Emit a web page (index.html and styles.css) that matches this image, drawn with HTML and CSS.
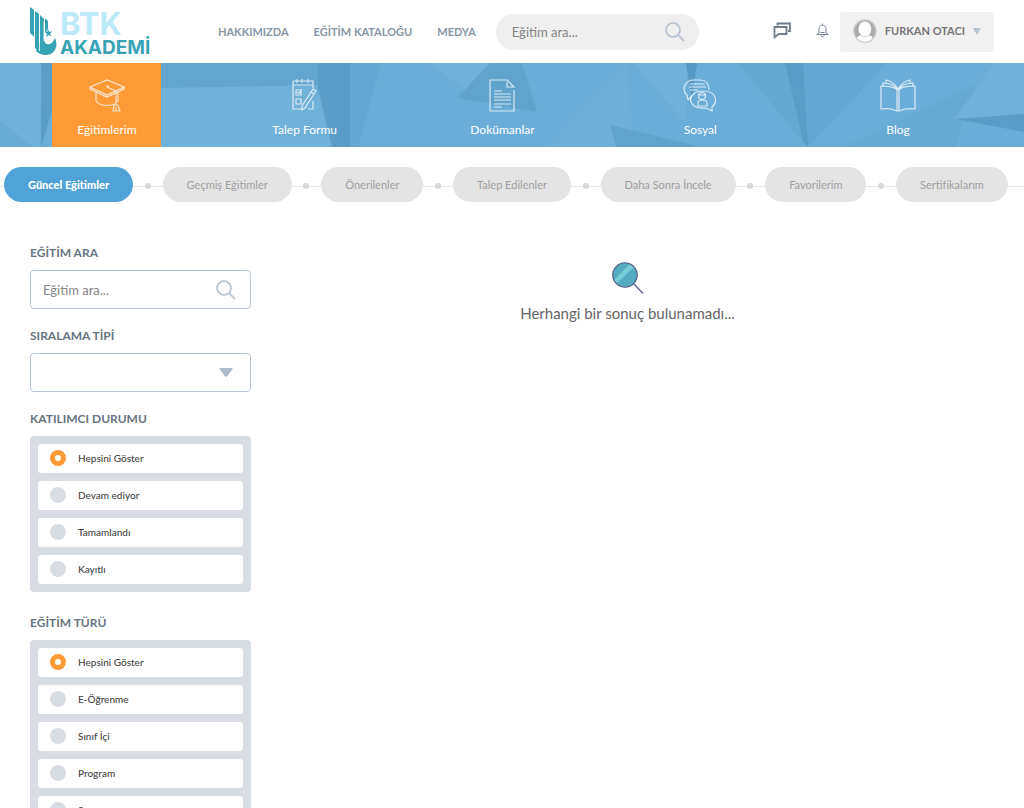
FILE: index.html
```html
<!DOCTYPE html>
<html lang="tr">
<head>
<meta charset="utf-8">
<meta name="viewport" content="width=device-width, initial-scale=1">
<title>BTK Akademi</title>
<link rel="stylesheet" href="styles.css">
</head>
<body>
<header class="header">
  <a class="logo" href="#">
    <svg class="logo-mark" width="27" height="50" viewBox="0 0 27 50" fill="#38a3b5">
      <path d="M0 0l4 3v27l-4-4zM5 4l4 3v38l-4-4V30zM10 8l4 4v35l-4-1zM15 11l3 3v8l-3 4z"/>
      <path d="M18 22l1.300 2.700 3-.2-2.200 2 1.400 3-2.800-1.500-2.500 1.900.7-3.100-2.400-2 3-.3z"/>
      <path d="M14 33c1 6 8 6 11-2 4 9-1 17-9 17-5 0-8-2-10-4l6-15z"/>
      <path d="M9.500 8v36M14 14v20" fill="none" stroke="#fff" stroke-width=".8"/>
    </svg>
    <span class="logo-text"><span class="logo-top">BTK</span><span class="logo-bottom">AKADEMİ</span></span>
  </a>
  <nav class="main-nav">
    <a href="#">HAKKIMIZDA</a>
    <a href="#">EĞİTİM KATALOĞU</a>
    <a href="#">MEDYA</a>
  </nav>
  <form class="top-search">
    <input type="text" placeholder="Eğitim ara..." aria-label="Eğitim ara">
    <button type="button" aria-label="Ara"><svg width="20" height="20" viewBox="0 0 20 20" fill="none" stroke="#b5c2d1" stroke-width="1.700"><circle cx="8" cy="8" r="7"/><path d="M13 13l6 6"/></svg></button>
  </form>
  <div class="user-area">
    <button class="icon-button" type="button" aria-label="Mesajlar">
      <svg width="18" height="17" viewBox="0 0 18 17" fill="none" stroke="#6f7d8d" stroke-width="1.800"><path d="M4.500 3.500V1.500H17v7.500h-2"/><path d="M1.500 5h12v7H6l-4.500 3.200z"/></svg>
    </button>
    <button class="icon-button" type="button" aria-label="Bildirimler">
      <svg width="13" height="15" viewBox="0 0 13 15" fill="none" stroke="#788797"><path d="M6.500.5v1.500M3 10V6c0-5 7-5 7 0v4l2.300 1.500H.7L3 10zM5 12c0 2.500 3 2.500 3 0M4.500 9.500h4"/></svg>
    </button>
    <button class="profile" type="button">
      <svg width="24" height="24" viewBox="0 0 24 24"><circle cx="12" cy="12" r="11" fill="#aaa" stroke="#c5c5c5" stroke-width="1.500"/><ellipse cx="12" cy="10" rx="6.500" ry="7.500" fill="#fff"/><path d="M4 19c2-3 4-2.500 5-2 2 1.500 4 1.500 6 0 1-.5 3-1 5 2-4 5-12 5-16 0z" fill="#fff"/></svg>
      <span>FURKAN OTACI</span>
      <svg width="8" height="6" viewBox="0 0 8 6"><path d="M0 0h8L4.500 6h-1z" fill="#b5c2d1"/></svg>
    </button>
  </div>
</header>

<nav class="banner">
  <svg class="banner-art" viewBox="0 0 1024 84" preserveAspectRatio="none" aria-hidden="true">
    <path d="M0 0h41l-1 84H0z" fill="#70b1da"/>
    <path d="M0 57l33 27H0z" fill="#68abd4"/>
    <path d="M41 0h12v44L41 84z" fill="#5a9dc8"/>
    <path d="M161 0h157v22l-157 3z" fill="#62a6d0"/>
    <path d="M161 25l155-2 16 61H161z" fill="#70b1da"/>
    <path d="M318 0h33v84h-19l-14-60z" fill="#5a9dc8"/>
    <path d="M350 0h31l-23 84h-8z" fill="#63a7d2"/>
    <path d="M430 0h65l-28 28z" fill="#70b1da"/>
    <path d="M490 0h32l15 49-80-14z" fill="#60a4ce"/>
    <path d="M550 84l76-84 7 84z" fill="#6dafd9"/>
    <path d="M610 62l92 22h-86z" fill="#60a4ce"/>
    <path d="M634 0h53l-2 60z" fill="#70b1da"/>
    <path d="M686 0h11l-5 38z" fill="#5699c4"/>
    <path d="M738 0h66l3 84z" fill="#65a9d3"/>
    <path d="M785 0h102l-79 84z" fill="#63a7d2"/>
    <path d="M785 0h18l5 84-5-6z" fill="#5a9dc8"/>
    <path d="M975 22L843 84h112z" fill="#66aad4"/>
    <path d="M994 0h30v51l-69 5z" fill="#70b1da"/>
    <path d="M955 56l69-5v18z" fill="#5a9dc8"/>
  </svg>
  <a class="tab tab-active" href="#">
    <svg width="36" height="34" viewBox="0 0 36 34"><path d="M1 9L18 2l17 7-17 8zM1 9v2l17 8 17-8V9M7 14v9c4 6 18 6 22 0v-9M18 9l9 4v14M17 8h3M25 27h4l2 6h-7zM27 29v4"/></svg>
    <span>Eğitimlerim</span>
  </a>
  <a class="tab" href="#">
    <svg width="36" height="34" viewBox="0 0 36 34"><path d="M6 3v28h10M6 3h20v7M26 23v8h-5M6 7h20M10 1v4M15 1v4M21 1v4M9 12h5v5H9zM9 21h5v5H9zM10 14l2 1 3-4M26 11l3 2-11 17-3 2v-4zM24 14l3 2"/></svg>
    <span>Talep Formu</span>
  </a>
  <a class="tab" href="#">
    <svg width="36" height="34" viewBox="0 0 36 34"><path d="M30 12v21H6V2h17l7 7h-7V4M10 13h8M10 16h17M10 19h17M10 22h17M10 26h17M10 29h8"/></svg>
    <span>Dokümanlar</span>
  </a>
  <a class="tab" href="#">
    <svg width="36" height="34" viewBox="0 0 36 34"><path d="M6 22l-1-5C-1 12 3 2 12 2h6c6 0 9 4 9 10M6 22l4-4M8 6h15M7 9h17M8 12h8"/><path d="M30 33l-6-3c-20 2-20-17-3-17 14 0 15 11 9 16z"/><circle cx="20" cy="18" r="3.500"/><path d="M16 28v-3c0-4 9-4 9 0v3zM17 17h7"/></svg>
    <span>Sosyal</span>
  </a>
  <a class="tab" href="#">
    <svg width="36" height="34" viewBox="0 0 36 34"><path d="M18 12c-5-4-11-4-17-4v23c6-1 12 0 16 2h2c4-2 10-3 16-2V8c-6 0-12 0-17 4zM17 12v21M19 12v21M3 8V5c6 0 11 1 15 7 4-6 9-7 15-7v3M6 5V2c6 1 9 4 12 9 3-5 6-8 12-9v3"/></svg>
    <span>Blog</span>
  </a>
</nav>

<nav class="steps">
  <a class="pill pill-active" href="#">Güncel Eğitimler</a><i class="dot"></i>
  <a class="pill" href="#">Geçmiş Eğitimler</a><i class="dot"></i>
  <a class="pill" href="#">Önerilenler</a><i class="dot"></i>
  <a class="pill" href="#">Talep Edilenler</a><i class="dot"></i>
  <a class="pill" href="#">Daha Sonra İncele</a><i class="dot"></i>
  <a class="pill" href="#">Favorilerim</a><i class="dot"></i>
  <a class="pill" href="#">Sertifikalarım</a>
</nav>

<main class="content">
  <form class="filters">
    <div class="field">
      <label class="title" for="search">EĞİTİM ARA</label>
      <div class="box">
        <input id="search" type="text" placeholder="Eğitim ara...">
        <button type="button" aria-label="Ara"><svg width="20" height="20" viewBox="0 0 20 20" fill="none" stroke="#b5c2d1" stroke-width="1.700"><circle cx="8" cy="8" r="7"/><path d="M13 13l6 6"/></svg></button>
      </div>
    </div>
    <div class="field">
      <label class="title" for="sort">SIRALAMA TİPİ</label>
      <div class="box">
        <select id="sort"><option></option></select>
        <svg class="caret" width="14" height="9" viewBox="0 0 14 9"><path d="M1 0h12q1 0 .5 1L8.500 8q-1.500 1.500-3 0L.5 1Q0 0 1 0z" fill="#adbccb"/></svg>
      </div>
    </div>
    <fieldset class="group">
      <legend class="title">KATILIMCI DURUMU</legend>
      <div class="options">
        <label class="option"><input type="radio" name="status" checked>Hepsini Göster</label>
        <label class="option"><input type="radio" name="status">Devam ediyor</label>
        <label class="option"><input type="radio" name="status">Tamamlandı</label>
        <label class="option"><input type="radio" name="status">Kayıtlı</label>
      </div>
    </fieldset>
    <fieldset class="group">
      <legend class="title">EĞİTİM TÜRÜ</legend>
      <div class="options">
        <label class="option"><input type="radio" name="type" checked>Hepsini Göster</label>
        <label class="option"><input type="radio" name="type">E-Öğrenme</label>
        <label class="option"><input type="radio" name="type">Sınıf İçi</label>
        <label class="option"><input type="radio" name="type">Program</label>
        <label class="option"><input type="radio" name="type">Sınav</label>
      </div>
    </fieldset>
  </form>
  <section class="results">
    <svg width="32" height="34" viewBox="0 0 32 34"><path d="M21 22l10 10.500" stroke="#66709a" stroke-width="1.600"/><circle cx="13" cy="14" r="12.200" fill="#55abc2"/><path d="M2 19L18 3l4 3L5 22z" fill="#79ccd8"/><circle cx="13" cy="14" r="12.200" fill="none" stroke="#5b6790" stroke-width="1.300"/></svg>
    <p>Herhangi bir sonuç bulunamadı...</p>
  </section>
</main>
</body>
</html>
```
FILE: styles.css
```css
* { box-sizing: border-box; }
html { scrollbar-width: none; }
body { margin: 0; background: #fff; font-family: Lato, "Open Sans", sans-serif; color: #555; }
a { text-decoration: none; }
button { border: 0; padding: 0; background: none; font: inherit; display: flex; align-items: center; }
input, select { font: inherit; color: #777; }
input::placeholder { color: #858585; opacity: 1; }

.header { display: flex; align-items: center; height: 63px; padding: 0 30px; }
.logo { display: flex; gap: 3px; align-items: center; width: 188px; }
.logo-text { display: flex; flex-direction: column; padding-top: 3px; font-family: Inter, sans-serif; font-weight: 700; }
.logo-top { font-size: 31px; line-height: 28px; color: #bce8f7; }
.logo-bottom { font-size: 19px; line-height: 19px; color: #38a3b5; }
.main-nav { display: flex; gap: 25px; font-size: 11px; font-weight: 700; line-height: 16px; white-space: nowrap; }
.main-nav a { color: #8696a5; }
.top-search { display: flex; align-items: center; width: 203px; height: 36px; margin-left: 20px; padding: 0 14px 0 16px; border-radius: 18px; background: #efefef; font-size: 13px; }
.top-search input { flex: 1; min-width: 0; padding: 0; border: 0; background: none; }
.user-area { display: flex; align-items: center; margin-left: auto; gap: 25px; }
.icon-button { padding-bottom: 2px; }
.profile { gap: 8px; height: 40px; width: 154px; margin-left: -14px; padding: 0 13px 2px; border-radius: 3px; background: #f1f1f1; font-size: 11px; font-weight: 700; color: #777; white-space: nowrap; }

.banner { position: relative; display: grid; grid-template-columns: repeat(5, 1fr); justify-items: center; height: 84px; padding: 0 27px 0 8px; background: #6aadd8; }
.banner-art { position: absolute; inset: 0; width: 100%; height: 100%; }
.tab { position: relative; display: flex; flex-direction: column; align-items: center; gap: 9px; width: 109px; padding-top: 15px; color: #fff; font-size: 12px; line-height: 18px; }
.tab-active { background: #ff9b37; }
.tab svg { fill: none; stroke: #fff; stroke-opacity: .75; stroke-width: 1.200; }

.steps { display: flex; align-items: center; justify-content: space-between; margin-top: 20px; padding: 0 16px 0 4px; background: linear-gradient(#dfe7ee, #dfe7ee) 0 19px / 100% 1px no-repeat; }
.pill { padding: 0 24px; border-radius: 18px; background: #e4e4e4; color: #a0a0a0; font-size: 11px; line-height: 35px; white-space: nowrap; }
.pill-active { background: #51a3d7; color: #fff; font-weight: 900; }
.dot { width: 6px; height: 6px; margin-top: 2px; border-radius: 50%; background: #d5d7d8; }

.content { display: flex; padding: 42px 30px 0; }
.filters { width: 221px; flex-shrink: 0; }
.title { display: block; padding: 0; margin-bottom: 8px; font-size: 12px; line-height: 18px; font-weight: 700; color: #667482; }
.field { margin-bottom: 18px; }
.box { position: relative; display: flex; align-items: center; height: 39px; padding: 0 14px 0 12px; border: 1px solid #b7c4d3; border-radius: 4px; font-size: 13px; }
.box input { flex: 1; min-width: 0; padding: 0; border: 0; }
.box select { flex: 1; height: 36px; border: 0; background: none; appearance: none; }
.caret { position: absolute; right: 17px; pointer-events: none; }
.group { margin: 0 0 22px; padding: 0; border: 0; }
.options { display: grid; gap: 8px; padding: 8px; border-radius: 4px; background: #d8dde4; }
.option { display: flex; align-items: center; gap: 12px; height: 29px; padding: 0 12px 2px; border-radius: 3px; background: #fff; font-size: 10px; font-weight: 500; color: #444; }
.option input { appearance: none; width: 16px; height: 16px; margin: 0; border-radius: 50%; background: #d8dde4; }
.option input:checked { border: 5px solid #ff9b37; background: #fff; }

.results { flex: 1; display: flex; flex-direction: column; align-items: center; padding: 17px 0 0 10px; }
.results p { margin: 8px 0 0; font-size: 15px; line-height: 20px; color: #666; }
```
